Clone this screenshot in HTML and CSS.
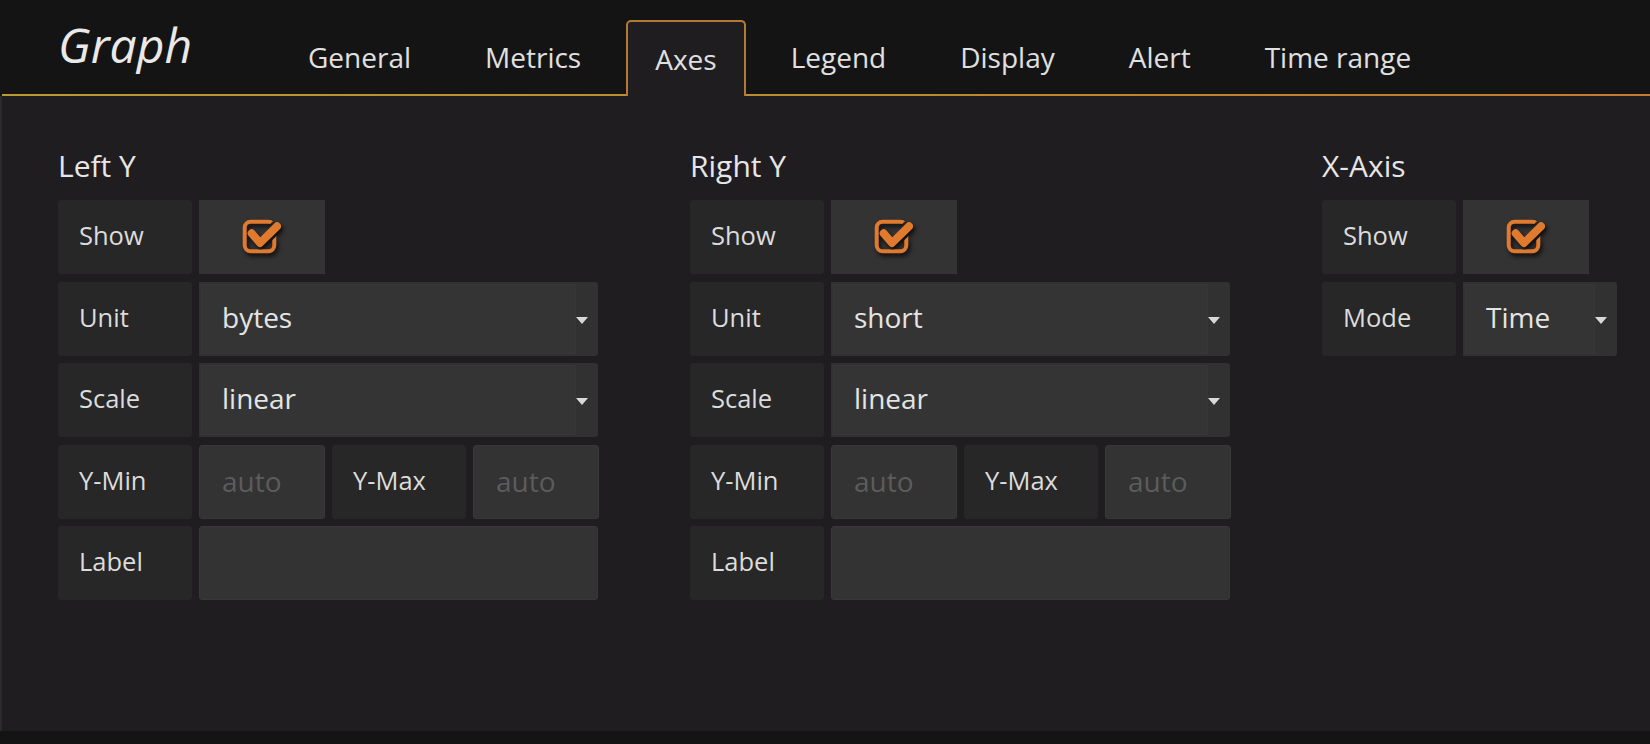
FILE: index.html
```html
<!DOCTYPE html>
<html lang="en">
<head>
<meta charset="utf-8">
<title>Graph - Axes</title>
<link rel="stylesheet" href="styles.css">
</head>
<body>
<div class="editor">
  <header class="header">
    <div class="title">Graph</div>
    <nav class="tabs">
      <div class="tab">General</div>
      <div class="tab">Metrics</div>
      <div class="tab active">Axes</div>
      <div class="tab">Legend</div>
      <div class="tab">Display</div>
      <div class="tab">Alert</div>
      <div class="tab">Time range</div>
    </nav>
  </header>
  <main class="content">
    <section class="group group-y">
      <h5 class="group-title">Left Y</h5>
      <div class="row">
        <div class="label">Show</div>
        <div class="checkfield">
          <svg class="check" width="44" height="40" viewBox="0 0 44 40">
            <mask id="cm1"><rect x="0" y="0" width="44" height="40" fill="#fff"/><path d="M19 25 L36 8.3" stroke="#000" stroke-width="13" stroke-linecap="round" fill="none"/></mask>
            <rect x="3.7" y="3.7" width="29.6" height="29.6" rx="6" fill="none" stroke="#e07a2f" stroke-width="4" mask="url(#cm1)"/>
            <path d="M10.7 15.3 L19 25 L36 8.3" fill="none" stroke="#e07a2f" stroke-width="8" stroke-linecap="round" stroke-linejoin="round"/>
          </svg>
        </div>
      </div>
      <div class="row">
        <div class="label">Unit</div>
        <div class="select"><span class="select-value">bytes</span><span class="caret"></span></div>
      </div>
      <div class="row">
        <div class="label">Scale</div>
        <div class="select"><span class="select-value">linear</span><span class="caret"></span></div>
      </div>
      <div class="row">
        <div class="label">Y-Min</div>
        <div class="input"><span class="placeholder">auto</span></div>
        <div class="label">Y-Max</div>
        <div class="input"><span class="placeholder">auto</span></div>
      </div>
      <div class="row">
        <div class="label">Label</div>
        <div class="input input-wide"></div>
      </div>
    </section>

    <section class="group group-y">
      <h5 class="group-title">Right Y</h5>
      <div class="row">
        <div class="label">Show</div>
        <div class="checkfield">
          <svg class="check" width="44" height="40" viewBox="0 0 44 40">
            <mask id="cm2"><rect x="0" y="0" width="44" height="40" fill="#fff"/><path d="M19 25 L36 8.3" stroke="#000" stroke-width="13" stroke-linecap="round" fill="none"/></mask>
            <rect x="3.7" y="3.7" width="29.6" height="29.6" rx="6" fill="none" stroke="#e07a2f" stroke-width="4" mask="url(#cm2)"/>
            <path d="M10.7 15.3 L19 25 L36 8.3" fill="none" stroke="#e07a2f" stroke-width="8" stroke-linecap="round" stroke-linejoin="round"/>
          </svg>
        </div>
      </div>
      <div class="row">
        <div class="label">Unit</div>
        <div class="select"><span class="select-value">short</span><span class="caret"></span></div>
      </div>
      <div class="row">
        <div class="label">Scale</div>
        <div class="select"><span class="select-value">linear</span><span class="caret"></span></div>
      </div>
      <div class="row">
        <div class="label">Y-Min</div>
        <div class="input"><span class="placeholder">auto</span></div>
        <div class="label">Y-Max</div>
        <div class="input"><span class="placeholder">auto</span></div>
      </div>
      <div class="row">
        <div class="label">Label</div>
        <div class="input input-wide"></div>
      </div>
    </section>

    <section class="group group-x">
      <h5 class="group-title">X-Axis</h5>
      <div class="row">
        <div class="label">Show</div>
        <div class="checkfield">
          <svg class="check" width="44" height="40" viewBox="0 0 44 40">
            <mask id="cm3"><rect x="0" y="0" width="44" height="40" fill="#fff"/><path d="M19 25 L36 8.3" stroke="#000" stroke-width="13" stroke-linecap="round" fill="none"/></mask>
            <rect x="3.7" y="3.7" width="29.6" height="29.6" rx="6" fill="none" stroke="#e07a2f" stroke-width="4" mask="url(#cm3)"/>
            <path d="M10.7 15.3 L19 25 L36 8.3" fill="none" stroke="#e07a2f" stroke-width="8" stroke-linecap="round" stroke-linejoin="round"/>
          </svg>
        </div>
      </div>
      <div class="row">
        <div class="label">Mode</div>
        <div class="select select-mode"><span class="select-value">Time</span><span class="caret"></span></div>
      </div>
    </section>
  </main>
</div>
</body>
</html>
```

FILE: styles.css
```css
* {
  box-sizing: border-box;
}

html,
body {
  margin: 0;
  padding: 0;
  background: #141414;
}

body {
  font-family: "Open Sans", "DejaVu Sans", sans-serif;
  color: #d8d9da;
  height: 744px;
  overflow: hidden;
}

.header {
  display: flex;
  align-items: flex-start;
  height: 96px;
  margin-left: 2px;
  background: #141414;
  border-bottom: 2px solid #b8862f;
  border-image: linear-gradient(to right, #b99a32 0%, #bd8a31 50%, #c27a30 100%) 1;
}

.title {
  width: 221px;
  margin-left: 56px;
  margin-top: 15px;
  font-size: 48px;
  font-style: italic;
  line-height: 60px;
  color: #e9e9e9;
  white-space: nowrap;
}

.tabs {
  display: flex;
  gap: 16px;
  margin-top: 20px;
}

.tab {
  height: 76px;
  padding: 16px 27px 20px;
  border: 2px solid transparent;
  border-bottom: 0;
  border-radius: 5px 5px 0 0;
  font-size: 28px;
  line-height: 38px;
  color: #e0e0e0;
  white-space: nowrap;
}

.tab.active {
  padding-top: 18px;
  padding-bottom: 18px;
  border-color: #b27a35;
  background: #1f1d1f;
}

.content {
  display: flex;
  align-items: flex-start;
  gap: 92px;
  height: 635px;
  padding: 50px 0 0 56px;
  background: #1f1d1f;
  border-left: 2px solid #2a2a2a;
}

.group-y {
  width: 540px;
}

.group-x {
  width: 296px;
}

.group-title {
  margin: 0 0 14px;
  font-size: 30px;
  font-weight: 400;
  line-height: 40px;
  color: #e6e6e6;
}

.row {
  display: flex;
  gap: 7px;
  height: 74px;
  margin-bottom: 7.5px;
}

.label {
  display: flex;
  align-items: center;
  width: 134px;
  flex: none;
  padding: 0 0 4px 21px;
  background: #272727;
  border-radius: 3px;
  font-size: 25.5px;
  color: #dcdcdc;
}

.checkfield {
  display: flex;
  align-items: center;
  justify-content: center;
  width: 126px;
  background: #333333;
}

.check {
  display: block;
  margin-top: 2px;
  margin-left: 2px;
  filter: drop-shadow(2px 3px 2px rgba(0, 0, 0, 0.75));
}

.select {
  display: flex;
  align-items: center;
  flex: 1;
  background: #313131;
  border-radius: 0 3px 3px 0;
}

.select-mode {
  flex: none;
  width: 154px;
}

.select-value {
  display: flex;
  align-items: center;
  align-self: stretch;
  flex: 1;
  margin: 2px 0 2px 2px;
  padding: 0 0 4px 20px;
  background: #343434;
  border: 1px solid #373737;
  font-size: 28px;
  color: #e4e4e4;
}

.caret {
  width: 0;
  height: 0;
  margin: 3px 10px 0 0;
  border-left: 6.5px solid transparent;
  border-right: 6.5px solid transparent;
  border-top: 7px solid #d8d9da;
}

.input {
  display: flex;
  align-items: center;
  width: 126px;
  flex: none;
  padding: 0 0 2px 22px;
  background: #333333;
  border: 1px solid #383838;
  border-radius: 3px;
  font-size: 28px;
}

.input-wide {
  flex: 1;
}

.placeholder {
  color: #5c5c5c;
}
```
